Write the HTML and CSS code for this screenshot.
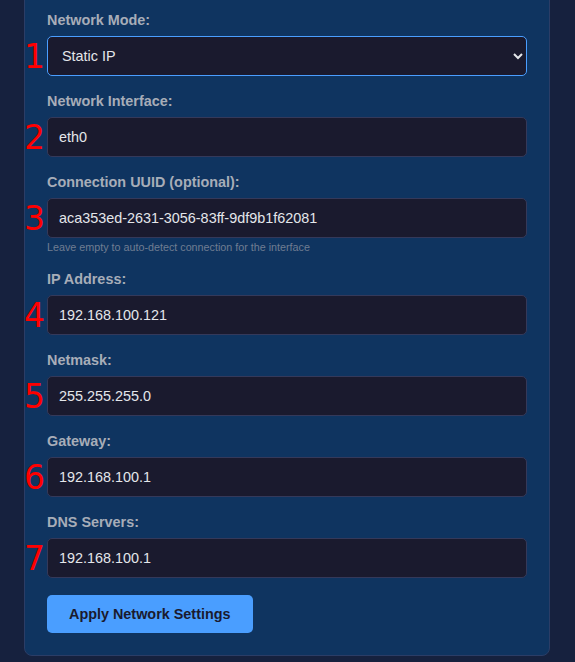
FILE: index.html
```html
<!DOCTYPE html>
<html lang="en">
<head>
  <meta charset="UTF-8">
  <meta name="viewport" content="width=device-width, initial-scale=1">
  <title>Network Settings</title>
  <link rel="stylesheet" href="styles.css">
</head>
<body>
  <div class="page">
    <div class="settings-card">
      <form id="networkForm">
        <div class="form-group">
          <label for="mode">Network Mode:</label>
          <div class="field">
            <span class="marker">1</span>
            <select id="mode" name="mode" class="is-focused">
              <option value="static">Static IP</option>
              <option value="dhcp">DHCP</option>
            </select>
          </div>
        </div>
        <div class="form-group">
          <label for="iface">Network Interface:</label>
          <div class="field">
            <span class="marker">2</span>
            <input type="text" id="iface" name="iface" value="eth0">
          </div>
        </div>
        <div class="form-group">
          <label for="uuid">Connection UUID (optional):</label>
          <div class="field">
            <span class="marker">3</span>
            <input type="text" id="uuid" name="uuid" value="aca353ed-2631-3056-83ff-9df9b1f62081">
          </div>
          <div class="help-text">Leave empty to auto-detect connection for the interface</div>
        </div>
        <div class="form-group">
          <label for="ip">IP Address:</label>
          <div class="field">
            <span class="marker">4</span>
            <input type="text" id="ip" name="ip" value="192.168.100.121">
          </div>
        </div>
        <div class="form-group">
          <label for="netmask">Netmask:</label>
          <div class="field">
            <span class="marker">5</span>
            <input type="text" id="netmask" name="netmask" value="255.255.255.0">
          </div>
        </div>
        <div class="form-group">
          <label for="gateway">Gateway:</label>
          <div class="field">
            <span class="marker">6</span>
            <input type="text" id="gateway" name="gateway" value="192.168.100.1">
          </div>
        </div>
        <div class="form-group">
          <label for="dns">DNS Servers:</label>
          <div class="field">
            <span class="marker">7</span>
            <input type="text" id="dns" name="dns" value="192.168.100.1">
          </div>
        </div>
        <button type="submit" class="apply-btn">Apply Network Settings</button>
      </form>
    </div>
  </div>
</body>
</html>
```

FILE: styles.css
```css
body {
  background: #16213e;
  font-family: 'Liberation Sans', Arial, sans-serif;
  margin: 0;
  overflow: hidden;
}
.page {
  padding: 0 25px 0 24px;
}
.settings-card {
  background: #0f3460;
  border: 1px solid #2b3d66;
  border-radius: 8px;
  padding: 22px;
  margin-top: -11px;
}
.form-group {
  margin-bottom: 17px;
}
label {
  display: block;
  font-size: 14.4px;
  font-weight: 700;
  line-height: 16px;
  color: #a7adb8;
  margin-bottom: 8px;
}
.field {
  position: relative;
}
.marker {
  position: absolute;
  right: calc(100% + 2px);
  top: 50%;
  transform: translateY(-50%);
  font-family: 'DejaVu Sans', sans-serif;
  font-size: 33px;
  line-height: 1;
  color: #ff0000;
}
input, select {
  display: block;
  width: 100%;
  height: 40px;
  padding: 0 11px;
  border: 1px solid #34395a;
  border-radius: 5px;
  font-family: inherit;
  font-size: 14.4px;
  background: #1a1a2e;
  color: #e4e6ea;
  box-sizing: border-box;
  outline: none;
}
select {
  padding-left: 10px;
  color-scheme: dark;
}
select.is-focused,
input:focus, select:focus {
  border-color: #4a9eff;
}
.help-text {
  margin-top: 3px;
  font-size: 10.75px;
  line-height: 13px;
  color: #6f7d92;
}
.apply-btn {
  display: block;
  padding: 0 22px;
  height: 38px;
  background: #4a9eff;
  color: #1a1a2e;
  border: none;
  border-radius: 5px;
  font-family: inherit;
  font-size: 14.4px;
  font-weight: 700;
  cursor: pointer;
}
.apply-btn:hover {
  background: #3a8cf0;
}
```
